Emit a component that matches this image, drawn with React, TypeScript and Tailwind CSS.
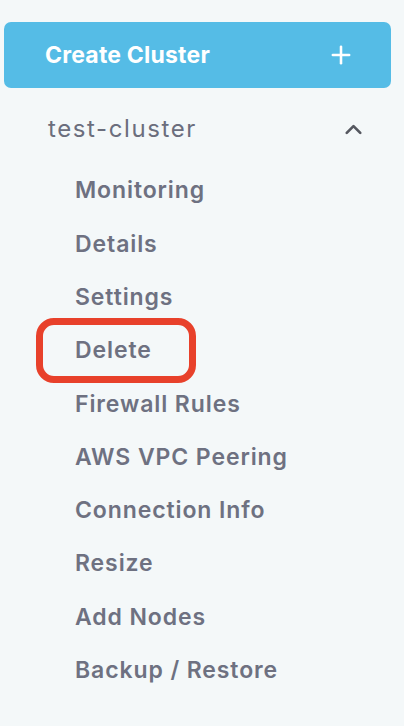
import { Plus, ChevronUp } from 'lucide-react';

const items = [
  'Monitoring',
  'Details',
  'Settings',
  'Delete',
  'Firewall Rules',
  'AWS VPC Peering',
  'Connection Info',
  'Resize',
  'Add Nodes',
  'Backup / Restore',
];

export default function App() {
  return (
    <div className="min-h-[726px] w-[404px] bg-[#f4f8f9] pt-[22px] pl-[4px] pr-[13px] font-['Inter',sans-serif]">
      <button className="flex h-[66px] w-full items-center justify-between rounded-[7px] bg-[#55bce6] pl-[41px] pr-[36px] text-white">
        <span className="text-[23px] font-bold tracking-[0.2px]">Create Cluster</span>
        <Plus className="h-[28px] w-[28px]" strokeWidth={2.2} />
      </button>

      <div className="mt-[20px] flex h-[42px] items-center justify-between pl-[44px] pr-[24px]">
        <span className="text-[24px] tracking-[1.6px] text-[#6b6e7d]">test-cluster</span>
        <ChevronUp className="h-[27px] w-[27px] text-[#555860]" strokeWidth={2.4} />
      </div>

      {/* cluster sub menu */}
      <ul className="mt-[14px] pl-[71px]">
        {items.map((item) => (
          <li key={item} className="flex h-[53.3px] items-center">
            {item === 'Delete' ? (
              <span className="-ml-[39px] flex h-[65px] w-[160px] items-center rounded-[18px] border-[7px] border-[#e8412b] pl-[32px] text-[23px] font-semibold tracking-[0.9px] text-[#6e7181]">
                {item}
              </span>
            ) : (
              <span className="text-[23px] font-semibold tracking-[0.9px] text-[#6e7181]">{item}</span>
            )}
          </li>
        ))}
      </ul>
    </div>
  );
}
